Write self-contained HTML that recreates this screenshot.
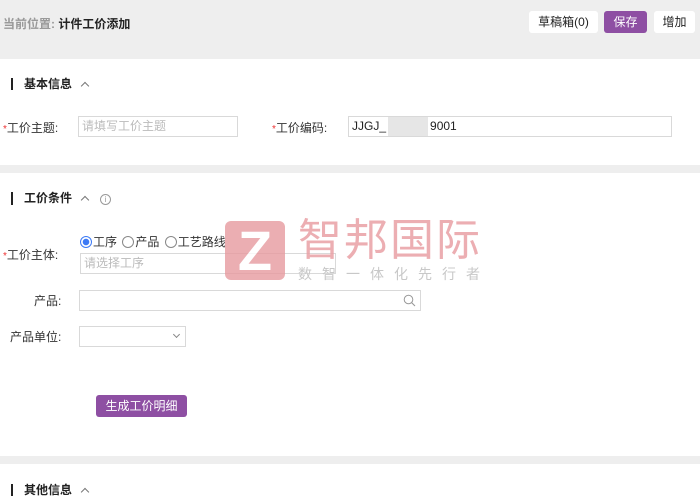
<!DOCTYPE html>
<html><head><meta charset="utf-8"><style>
*{box-sizing:border-box;margin:0;padding:0}
body{width:700px;height:503px;overflow:hidden;background:#fff;font-family:"Liberation Sans","Noto Sans CJK SC",sans-serif;font-size:12px;color:#333;position:relative}
.abs{position:absolute}
.gray{background:#eeeeee;left:0;width:700px}
.btn{position:absolute;top:11px;height:22px;line-height:22px;border-radius:3px;font-size:12px;text-align:center}
.h{position:absolute;left:11px;font-weight:bold;font-size:12px;color:#222;padding-left:11px;border-left:2px solid #222;line-height:12px}
.car{display:inline-block;width:6px;height:6px;border-left:1.3px solid #777;border-top:1.3px solid #777;transform:rotate(45deg);margin-left:10px;vertical-align:-1px}
.inp{position:absolute;border:1px solid #d9d9d9;height:21px;background:#fff;font-size:12px;line-height:19px;padding-left:3px}
.lab{position:absolute;font-size:12px;color:#333}
.star{color:#e33;font-size:10px}
.rad{display:inline-block;width:12px;height:12px;border:1px solid #888;border-radius:50%;vertical-align:-2px;margin-right:1px}
</style></head><body>
<div class="abs gray" style="top:0;height:59px"></div>
<div class="abs" style="left:3px;top:15px;font-size:12px;color:#999;font-weight:bold">当前位置: <span style="color:#222">计件工价添加</span></div>
<div class="btn" style="left:529px;width:69px;background:#fff;color:#222">草稿箱(0)</div>
<div class="btn" style="left:604px;width:43px;background:#8e4fa3;color:#fff">保存</div>
<div class="btn" style="left:654px;width:41px;background:#fff;color:#222">增加</div>

<div class="h" style="top:78px">基本信息<span class="car"></span></div>
<div class="lab" style="left:3px;top:119px"><span class="star">*</span>工价主题:</div>
<div class="inp" style="left:78px;top:116px;width:160px;color:#bbb">请填写工价主题</div>
<div class="lab" style="left:272px;top:119px"><span class="star">*</span>工价编码:</div>
<div class="inp" style="left:348px;top:116px;width:324px;color:#222">JJGJ_<span style="display:inline-block;width:40px;height:19px;background:#e6e6e6;vertical-align:top;margin:0 2px"></span>9001</div>

<div class="abs gray" style="top:165px;height:8px"></div>
<div class="h" style="top:192px">工价条件<span class="car"></span><span style="display:inline-block;margin-left:12px;width:11px;height:11px;border:1px solid #999;border-radius:50%;font-size:8px;line-height:9px;text-align:center;color:#999;font-weight:normal">i</span></div>
<div class="lab" style="left:80px;top:233px"><span class="rad" style="border-color:#3d7af5;background:radial-gradient(#3d7af5 3px,#fff 3.5px)"></span>工序 <span class="rad" style="margin-left:2px"></span>产品 <span class="rad" style="margin-left:2px"></span>工艺路线</div>
<div class="lab" style="left:3px;top:246px"><span class="star">*</span>工价主体:</div>
<div class="inp" style="left:80px;top:253px;width:256px;color:#bbb">请选择工序</div>
<div class="lab" style="left:34px;top:292px">产品:</div>
<div class="inp" style="left:79px;top:290px;width:342px"><svg class="abs" style="right:4px;top:3px" width="13" height="13" viewBox="0 0 13 13"><circle cx="5.5" cy="5.5" r="4.3" fill="none" stroke="#999" stroke-width="1"/><path d="M8.6 8.6L12 12" stroke="#999" stroke-width="1.1"/></svg></div>
<div class="lab" style="left:10px;top:328px">产品单位:</div>
<div class="inp" style="left:79px;top:326px;width:107px"><span class="abs" style="right:6px;top:5px;width:5px;height:5px;border-right:1px solid #888;border-bottom:1px solid #888;transform:rotate(45deg)"></span></div>
<div class="btn" style="left:96px;top:395px;width:91px;height:22px;background:#8e4fa3;color:#fff">生成工价明细</div>

<div class="abs" style="left:225px;top:221px;width:60px;height:59px;background:#e79a9f;opacity:.8;border-radius:6px;color:#fff;font-size:56px;font-weight:bold;line-height:59px;text-align:center">Z</div>
<div class="abs" style="left:298px;top:216px;font-size:44px;color:#e9a0a5;opacity:.85;line-height:50px;letter-spacing:2px">智邦国际</div>
<div class="abs" style="left:298px;top:264px;font-size:14px;color:#c8c8c8;letter-spacing:10px">数智一体化先行者</div>

<div class="abs gray" style="top:456px;height:8px"></div>
<div class="h" style="top:484px">其他信息<span class="car"></span></div>
</body></html>
